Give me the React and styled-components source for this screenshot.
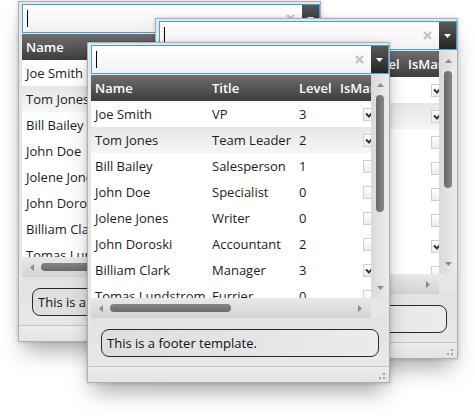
import styled, { createGlobalStyle } from 'styled-components'

const GlobalStyle = createGlobalStyle`
  body {
    margin: 0;
    background: #ffffff;
    font-family: 'Open Sans', 'Liberation Sans', sans-serif;
  }
`

const people = [
  { name: 'Joe Smith', title: 'VP', level: 3, manager: true },
  { name: 'Tom Jones', title: 'Team Leader', level: 2, manager: true },
  { name: 'Bill Bailey', title: 'Salesperson', level: 1, manager: false },
  { name: 'John Doe', title: 'Specialist', level: 0, manager: false },
  { name: 'Jolene Jones', title: 'Writer', level: 0, manager: false },
  { name: 'John Doroski', title: 'Accountant', level: 2, manager: false },
  { name: 'Billiam Clark', title: 'Manager', level: 3, manager: true },
  { name: 'Tomas Lundstrom', title: 'Furrier', level: 0, manager: false },
]

const Desktop = styled.div`
position: relative;
width: 475px;
height: 416px;
overflow: hidden;
background: #ffffff;
`

const Window = styled.div`
position: absolute;
left: ${p => p.$x}px;
top: ${p => p.$y}px;
width: 303px;
height: 341px;
box-sizing: border-box;
display: flex;
flex-direction: column;
padding: 2px 0 0 3px;
border: 1px solid #aeaeae;
background: #e6e6e6;
box-shadow: 0 0 4px rgba(0, 0, 0, 0.18), 0 14px 22px -6px rgba(0, 0, 0, 0.35);
`

const SearchBox = styled.div`
display: flex;
align-items: center;
height: 29px;
box-sizing: border-box;
border: 1px solid #3aa6dd;
background: linear-gradient(#ffffff, #f1f1f1);
`

const Caret = styled.span`
width: 1px;
height: 17px;
margin-left: 4px;
background: #000000;
`

const Clear = styled.svg`
margin-left: auto;
margin-right: 7px;
`

const DropButton = styled.div`
display: flex;
align-items: center;
justify-content: center;
width: 17px;
height: 100%;
background: linear-gradient(#585858, #262626);
`

const GridFrame = styled.div`
display: grid;
grid-template-columns: 280px 18px;
grid-template-rows: 223px 20px;
margin-top: 1px;
`

const Viewport = styled.div`
overflow: hidden;
background: #ffffff;
`

const Row = styled.div`
display: grid;
grid-template-columns: 117px 87px 41px 67px;
width: max-content;
height: 26px;
align-items: center;
font-size: 13px;
color: ${p => (p.$head ? '#ffffff' : '#1c1c1c')};
font-weight: ${p => (p.$head ? 600 : 400)};
background: ${p =>
    p.$head
      ? 'linear-gradient(#6e6e6e, #3e3e3e)'
      : p.$hover
        ? 'linear-gradient(#e6e6e6, #f6f6f6)'
        : '#ffffff'};
`

const Cell = styled.div`
padding-left: 4px;
white-space: nowrap;
overflow: hidden;
`

const CheckCell = styled.div`
display: flex;
justify-content: center;
`

const CheckBox = styled.div`
width: 13px;
height: 13px;
box-sizing: border-box;
border: 1px solid #cfcfcf;
background: linear-gradient(#ffffff, #ececec);
display: flex;
align-items: center;
justify-content: center;
`

const VScroll = styled.div`
display: flex;
flex-direction: column;
background: linear-gradient(to right, #d9d9d9, #ececec);
`

const HScroll = styled.div`
display: flex;
align-items: center;
background: linear-gradient(#e9e9e9, #d3d3d3);
`

const Arrow = styled.div`
display: flex;
align-items: center;
justify-content: center;
flex: 0 0 ${p => p.$size}px;
`

const VTrack = styled.div`
flex: 1;
display: flex;
justify-content: center;
`

const VThumb = styled.div`
width: 8px;
height: 117px;
border-radius: 4px;
background: linear-gradient(to right, #6a6a6a, #858585);
`

const HTrack = styled.div`
flex: 1;
display: flex;
align-items: center;
`

const HThumb = styled.div`
width: 121px;
height: 8px;
border-radius: 4px;
background: linear-gradient(#858585, #6a6a6a);
`

const Corner = styled.div`
background: #e6e6e6;
`

const Footer = styled.div`
height: 48px;
box-sizing: border-box;
padding: 11px 10px 0 10px;
background: linear-gradient(#e2e2e2, #e8e8e8);
`

const FooterBox = styled.div`
height: 28px;
box-sizing: border-box;
display: flex;
align-items: center;
padding-left: 5px;
border: 1px solid #2a2a2a;
border-radius: 8px;
background: linear-gradient(to right, #dedede, #ebebeb);
font-size: 13px;
color: #111111;
`

const StatusBar = styled.div`
flex: 1;
display: flex;
align-items: flex-end;
justify-content: flex-end;
padding: 0 4px 3px 0;
margin-left: -3px;
border-top: 1px solid #c4c4c4;
background: linear-gradient(#ececec, #e4e4e4);
`

const Check = () => (
  <svg width="9" height="8" viewBox="0 0 9 8">
    <path d="M1 3.5 L4 6.5 L8 1.5" fill="none" stroke="#333" strokeWidth="2" />
  </svg>
)

const Triangle = ({ dir, color = '#8a8a8a' }) => {
  const pts = {
    up: '0,4 3.5,0 7,4',
    down: '0,0 7,0 3.5,4',
    left: '4,0 4,7 0,3.5',
    right: '0,0 0,7 4,3.5',
  }[dir]
  const vertical = dir === 'up' || dir === 'down'
  return (
    <svg width={vertical ? 7 : 4} height={vertical ? 4 : 7}>
      <polygon points={pts} fill={color} />
    </svg>
  )
}

const ComboWindow = ({ x, y }) => (
  <Window $x={x} $y={y}>
    <SearchBox>
      <Caret />
      <Clear width="9" height="9" viewBox="0 0 9 9">
        <path d="M1 1 L8 8 M8 1 L1 8" stroke="#c4c4c4" strokeWidth="2.4" />
      </Clear>
      <DropButton>
        <Triangle dir="down" color="#ffffff" />
      </DropButton>
    </SearchBox>
    <GridFrame>
      <Viewport>
        <Row $head>
          <Cell>Name</Cell>
          <Cell>Title</Cell>
          <Cell>Level</Cell>
          <Cell>IsManager</Cell>
        </Row>
        {people.map((p, i) => (
          <Row key={p.name} $hover={i === 1}>
            <Cell>{p.name}</Cell>
            <Cell>{p.title}</Cell>
            <Cell>{p.level}</Cell>
            <CheckCell>
              <CheckBox>{p.manager && <Check />}</CheckBox>
            </CheckCell>
          </Row>
        ))}
      </Viewport>
      <VScroll>
        <Arrow $size={20}><Triangle dir="up" /></Arrow>
        <VTrack><VThumb /></VTrack>
        <Arrow $size={20}><Triangle dir="down" /></Arrow>
      </VScroll>
      <HScroll>
        <Arrow $size={19}><Triangle dir="left" /></Arrow>
        <HTrack><HThumb /></HTrack>
        <Arrow $size={22}><Triangle dir="right" /></Arrow>
      </HScroll>
      <Corner />
    </GridFrame>
    <Footer>
      <FooterBox>This is a footer template.</FooterBox>
    </Footer>
    <StatusBar>
      <svg width="6" height="6">
        <rect x="4" y="0" width="2" height="2" fill="#a2a2a2" />
        <rect x="0" y="4" width="2" height="2" fill="#a2a2a2" />
        <rect x="4" y="4" width="2" height="2" fill="#a2a2a2" />
      </svg>
    </StatusBar>
  </Window>
)

const App = () => (
  <>
    <GlobalStyle />
    <Desktop>
      <ComboWindow x={18} y={1} />
      <ComboWindow x={155} y={18} />
      <ComboWindow x={87} y={42} />
    </Desktop>
  </>
)

export default App
